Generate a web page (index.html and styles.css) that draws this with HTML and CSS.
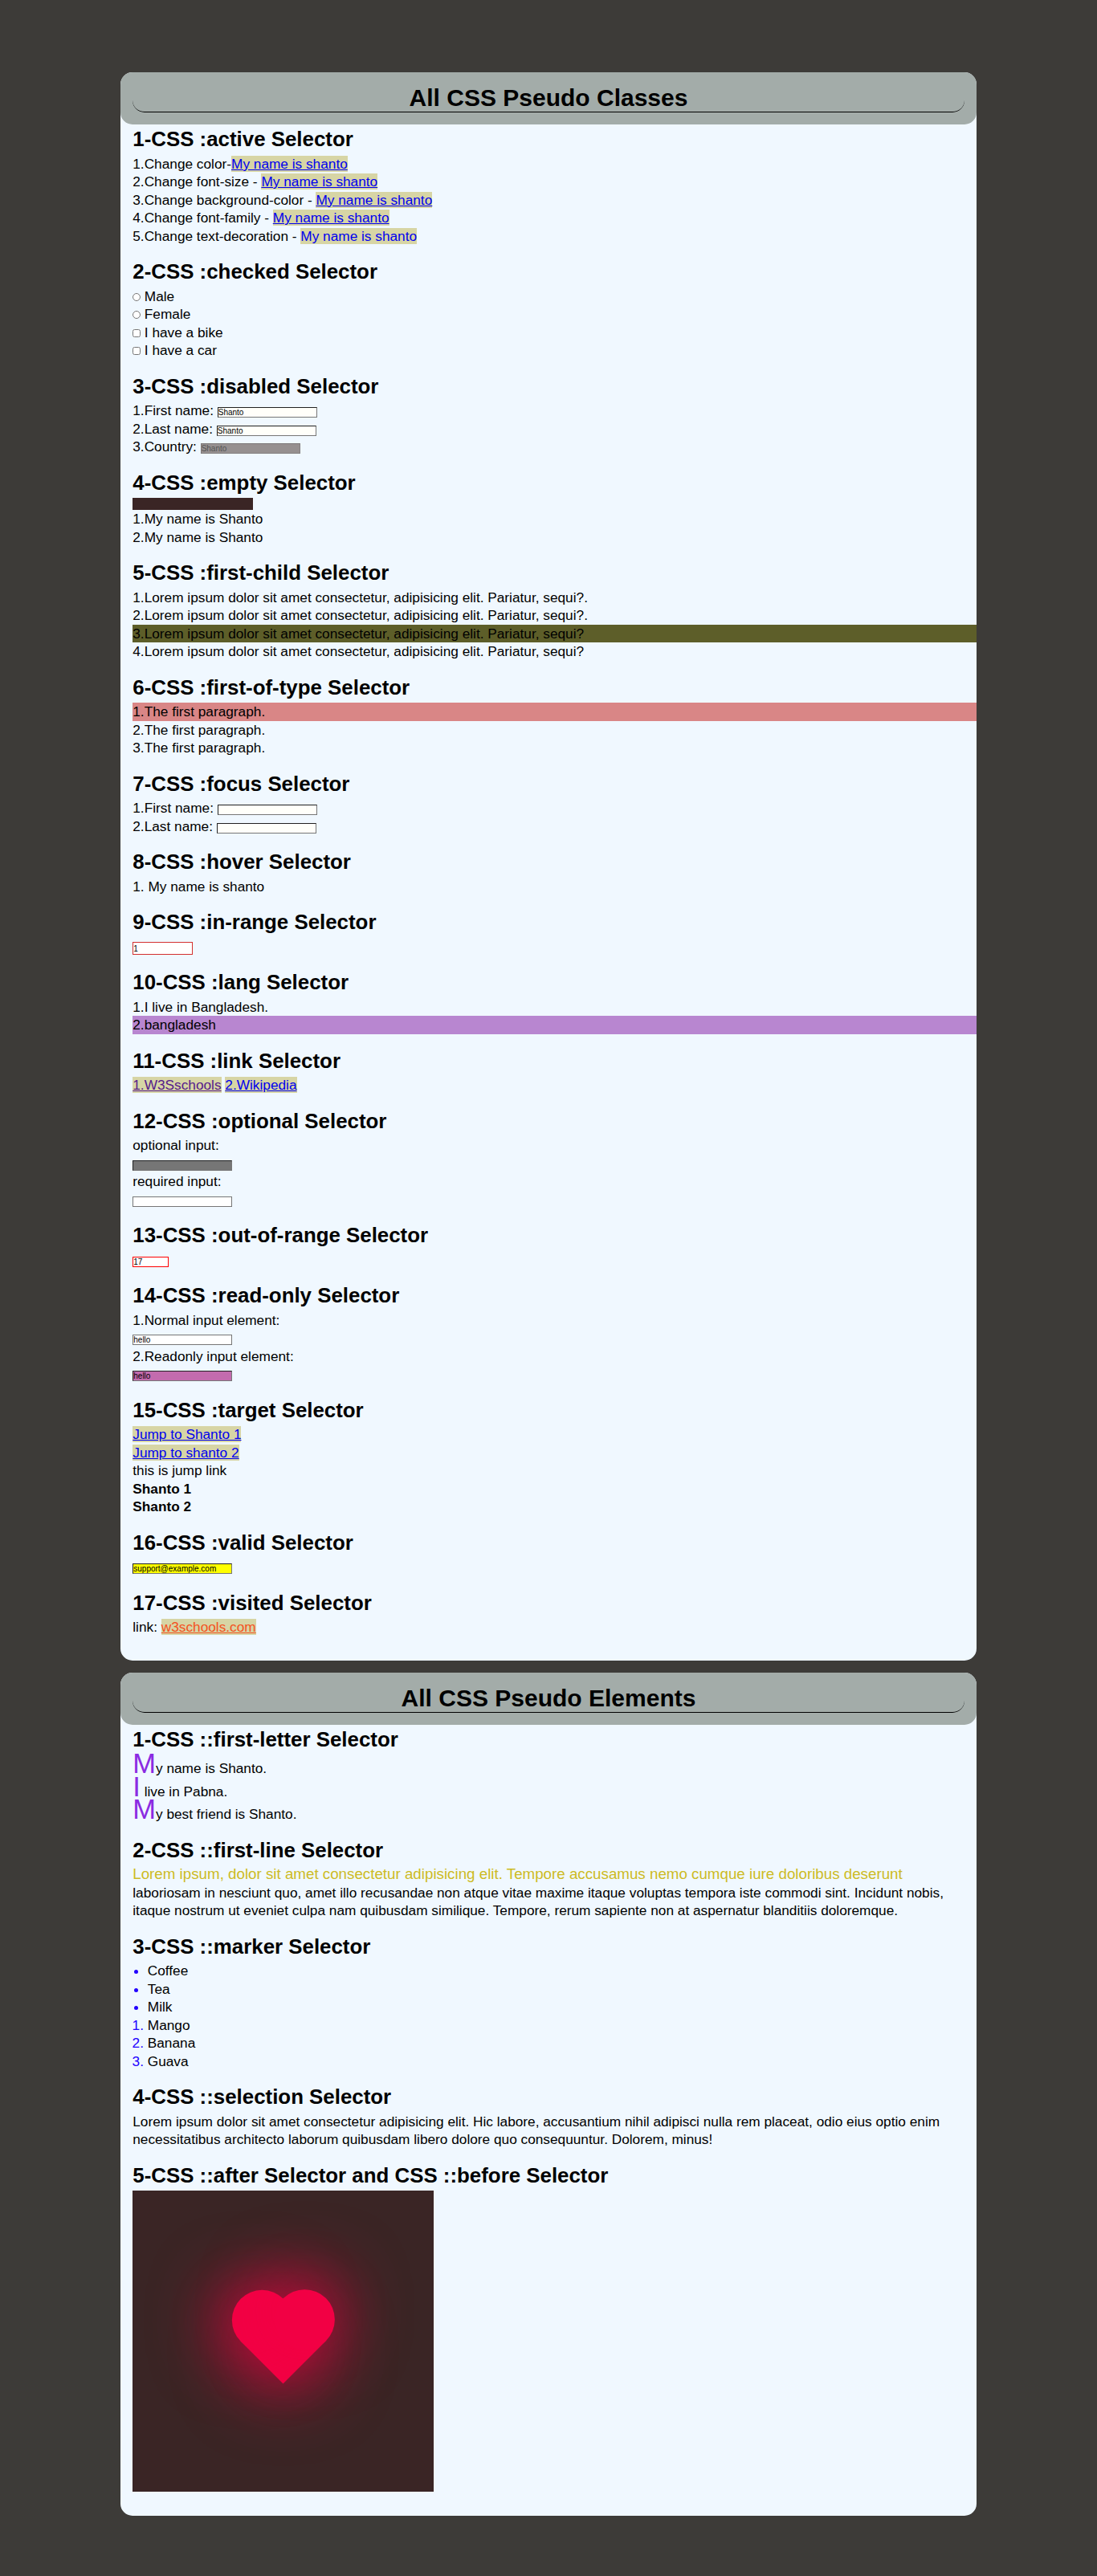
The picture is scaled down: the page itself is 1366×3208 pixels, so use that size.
FILE: index.html
```html
<!DOCTYPE html>
<html lang="en">
<head>
<meta charset="utf-8">
<title>All CSS Pseudo Classes</title>
<link rel="stylesheet" href="styles.css">
</head>
<body>
<main>
<div class="card">
  <header><h1>All CSS Pseudo Classes</h1></header>
  <section>
    <h2>1-CSS :active Selector</h2>
    <p>1.Change color-<a href="#a1">My name is shanto</a></p>
    <p>2.Change font-size - <a href="#a2">My name is shanto</a></p>
    <p>3.Change background-color - <a href="#a3">My name is shanto</a></p>
    <p>4.Change font-family - <a href="#a4">My name is shanto</a></p>
    <p>5.Change text-decoration - <a class="plain" href="#a5">My name is shanto</a></p>
  </section>
  <section>
    <h2>2-CSS :checked Selector</h2>
    <p><input type="radio" name="gender"> Male</p>
    <p><input type="radio" name="gender"> Female</p>
    <p><input type="checkbox"> I have a bike</p>
    <p><input type="checkbox"> I have a car</p>
  </section>
  <section>
    <h2>3-CSS :disabled Selector</h2>
    <p>1.First name: <input class="field ivory" type="text" value="Shanto"></p>
    <p>2.Last name: <input class="field ivory" type="text" value="Shanto"></p>
    <p>3.Country: <input class="field off" type="text" value="Shanto" disabled></p>
  </section>
  <section>
    <h2>4-CSS :empty Selector</h2>
    <div class="empty"></div>
    <p>1.My name is Shanto</p>
    <p>2.My name is Shanto</p>
  </section>
  <section>
    <h2>5-CSS :first-child Selector</h2>
    <p>1.Lorem ipsum dolor sit amet consectetur, adipisicing elit. Pariatur, sequi?.</p>
    <p>2.Lorem ipsum dolor sit amet consectetur, adipisicing elit. Pariatur, sequi?.</p>
    <p class="olive">3.Lorem ipsum dolor sit amet consectetur, adipisicing elit. Pariatur, sequi?</p>
    <p>4.Lorem ipsum dolor sit amet consectetur, adipisicing elit. Pariatur, sequi?</p>
  </section>
  <section>
    <h2>6-CSS :first-of-type Selector</h2>
    <p class="rose">1.The first paragraph.</p>
    <p>2.The first paragraph.</p>
    <p>3.The first paragraph.</p>
  </section>
  <section>
    <h2>7-CSS :focus Selector</h2>
    <p>1.First name: <input class="field ivory" type="text"></p>
    <p>2.Last name: <input class="field ivory" type="text"></p>
  </section>
  <section>
    <h2>8-CSS :hover Selector</h2>
    <p>1. My name is shanto</p>
  </section>
  <section>
    <h2>9-CSS :in-range Selector</h2>
    <p><input class="field in-range" type="text" value="1"></p>
  </section>
  <section>
    <h2>10-CSS :lang Selector</h2>
    <p>1.I live in Bangladesh.</p>
    <p class="violet">2.bangladesh</p>
  </section>
  <section>
    <h2>11-CSS :link Selector</h2>
    <p><a class="seen" href="#w3">1.W3Sschools</a> <a href="#wiki">2.Wikipedia</a></p>
  </section>
  <section>
    <h2>12-CSS :optional Selector</h2>
    <p>optional input:</p>
    <p><input class="field optional" type="text"></p>
    <p>required input:</p>
    <p><input class="field" type="text" required></p>
  </section>
  <section>
    <h2>13-CSS :out-of-range Selector</h2>
    <p><input class="field out-range" type="text" value="17"></p>
  </section>
  <section>
    <h2>14-CSS :read-only Selector</h2>
    <p>1.Normal input element:</p>
    <p><input class="field" type="text" value="hello"></p>
    <p>2.Readonly input element:</p>
    <p><input class="field readonly" type="text" value="hello" readonly></p>
  </section>
  <section>
    <h2>15-CSS :target Selector</h2>
    <p><a href="#shanto1">Jump to Shanto 1</a></p>
    <p><a href="#shanto2">Jump to shanto 2</a></p>
    <p>this is jump link</p>
    <p id="shanto1"><b>Shanto 1</b></p>
    <p id="shanto2"><b>Shanto 2</b></p>
  </section>
  <section>
    <h2>16-CSS :valid Selector</h2>
    <p><input class="field valid" type="email" value="support@example.com"></p>
  </section>
  <section>
    <h2>17-CSS :visited Selector</h2>
    <p>link: <a class="orange" href="#w3s">w3schools.com</a></p>
  </section>
</div>

<div class="card">
  <header><h1>All CSS Pseudo Elements</h1></header>
  <section>
    <h2>1-CSS ::first-letter Selector</h2>
    <p class="initial">My name is Shanto.</p>
    <p class="initial">I live in Pabna.</p>
    <p class="initial">My best friend is Shanto.</p>
  </section>
  <section>
    <h2>2-CSS ::first-line Selector</h2>
    <p class="lead">Lorem ipsum, dolor sit amet consectetur adipisicing elit. Tempore accusamus nemo cumque iure doloribus deserunt laboriosam in nesciunt quo, amet illo recusandae non atque vitae maxime itaque voluptas tempora iste commodi sint. Incidunt nobis, itaque nostrum ut eveniet culpa nam quibusdam similique. Tempore, rerum sapiente non at aspernatur blanditiis doloremque.</p>
  </section>
  <section>
    <h2>3-CSS ::marker Selector</h2>
    <ul><li>Coffee</li><li>Tea</li><li>Milk</li></ul>
    <ol><li>Mango</li><li>Banana</li><li>Guava</li></ol>
  </section>
  <section>
    <h2>4-CSS ::selection Selector</h2>
    <p>Lorem ipsum dolor sit amet consectetur adipisicing elit. Hic labore, accusantium nihil adipisci nulla rem placeat, odio eius optio enim necessitatibus architecto laborum quibusdam libero dolore quo consequuntur. Dolorem, minus!</p>
  </section>
  <section>
    <h2>5-CSS ::after Selector and CSS ::before Selector</h2>
    <div class="stage"><div class="heart"></div></div>
  </section>
</div>
</main>
</body>
</html>
```
FILE: styles.css
```css
* {
  margin: 0;
  padding: 0;
  box-sizing: border-box;
}

body {
  background: #3d3b38;
  color: #000;
  font: 17.25px/22.5px "Liberation Sans", Arial, sans-serif;
}

main {
  display: flex;
  flex-direction: column;
  gap: 15px;
  width: 78%;
  margin: 0 auto;
  padding: 90px 0 74px;
}

.card {
  background: #f0f8ff;
  border-radius: 15px;
  padding-bottom: 15px;
}

header {
  background: #a3aca9;
  border-radius: 15px;
  padding: 15px;
}

h1 {
  font-size: 30px;
  line-height: 34px;
  text-align: center;
  border-bottom: 1px solid #000;
  border-radius: 15px;
}

section {
  padding-left: 15px;
  margin-bottom: 15px;
}

h2 {
  font-size: 25.875px;
  line-height: 37.5px;
}

a {
  background: #d7d5a5;
  color: #0000ee;
}

.plain { text-decoration: none; }
.seen { color: #551a8b; }
.orange { color: #f4511e; }

input[type="radio"],
input[type="checkbox"] {
  width: 9.75px;
  height: 9.75px;
}

.field {
  appearance: none;
  width: 124px;
  height: 13px;
  border: 1px solid #767676;
  border-radius: 0;
  background: #fff;
  color: #000;
  font: 10px "Liberation Sans", Arial, sans-serif;
}

.ivory,
.valid,
.readonly,
.optional {
  border-color: #212121 #767676 #767676 #212121;
}

.ivory { background: #fffffa; }
.valid { background: #ff0; }
.readonly { background: #c36bae; }
.optional { background: #767676; }

.off {
  background: #969090;
  border-color: #7b7777 #848080 #848080 #7b7777;
  color: #545454;
}

.in-range {
  width: 75px;
  height: 16px;
  border-color: #d32f2f;
}

.out-range {
  width: 45px;
  border-color: #f00;
}

.empty {
  width: 150px;
  height: 15px;
  background: #3a2525;
}

.olive { background: #5d5e29; }
.rose { background: #d98686; }
.violet { background: #b886d0; }

.initial::first-letter {
  color: #8a2be2;
  font-size: 34.5px;
}

.lead::first-line {
  color: #cdbb24;
  font-size: 18.75px;
}

ul,
ol {
  padding-left: 18.5px;
}

li::marker { color: #2200ff; }

.stage {
  display: grid;
  place-items: center;
  width: 375px;
  height: 375px;
  background: #3a2525;
}

.heart {
  position: relative;
  width: 75px;
  height: 75px;
  background: #f20044;
  transform: rotate(-45deg);
  box-shadow: -7.5px 7.5px 90px #f20044;
}

.heart::before,
.heart::after {
  content: "";
  position: absolute;
  width: 75px;
  height: 75px;
  border-radius: 50%;
  background: #f20044;
}

.heart::before {
  top: -50%;
  box-shadow: -7.5px -7.5px 90px #f20044;
}

.heart::after {
  right: -50%;
  box-shadow: 7.5px -7.5px 90px #f20044;
}
```
